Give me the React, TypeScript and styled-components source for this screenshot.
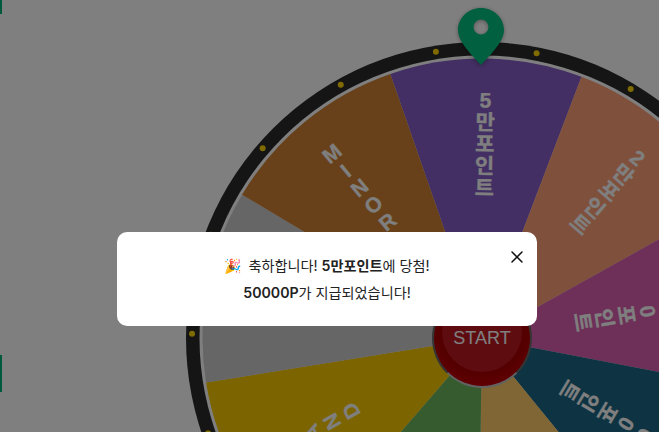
import React from 'react'
import styled, { createGlobalStyle } from 'styled-components'
import { X } from 'lucide-react'

const GlobalStyle = createGlobalStyle`
  html, body {
    margin: 0;
    padding: 0;
    background: #fff;
  }
`

const Stage = styled.div`
  position: relative;
  width: 659px;
  height: 432px;
  overflow: hidden;
  display: flex;
  align-items: flex-start;
`

const SideMark = styled.div<{ $top: number; $height: number }>`
  position: absolute;
  left: 0;
  top: ${(p) => p.$top}px;
  width: 2px;
  height: ${(p) => p.$height}px;
  background: #00b07a;
`

const WheelWrap = styled.div`
  position: relative;
  flex: none;
  width: 592px;
  height: 592px;
  margin: 42px 0 0 186px;
`

const WheelSvg = styled.svg`
  display: block;
`

const WheelChar = styled.text`
  font-family: 'Liberation Sans', 'Noto Sans CJK KR', sans-serif;
  font-size: 21px;
  font-weight: 700;
  fill: #fff;
  stroke: #fff;
  stroke-width: 0.3px;
  text-anchor: middle;
  dominant-baseline: central;
`

const Pin = styled.svg`
  position: absolute;
  left: 272px;
  top: -34px;
  filter: drop-shadow(0 1px 2px rgba(0, 0, 0, 0.35));
`

const StartButton = styled.div`
  position: absolute;
  left: 246px;
  top: 246px;
  width: 100px;
  height: 100px;
  box-sizing: border-box;
  border-radius: 50%;
  border: 2px solid #6a6a6a;
  border-bottom-color: #c4c4c4;
  background: radial-gradient(circle at 50% 40%, #b40000 0%, #aa0000 60%, #e00010 100%);
  display: flex;
  align-items: center;
  justify-content: center;
`

const StartCap = styled.div`
  width: 80px;
  height: 80px;
  margin-top: -12px;
  border-radius: 50%;
  background: #bf1822;
  flex: none;
  display: flex;
  align-items: center;
  justify-content: center;
  padding-top: 12px;
  box-sizing: border-box;
  color: #fff;
  font-family: 'Liberation Sans', sans-serif;
  font-size: 18px;
`

const Overlay = styled.div`
  position: absolute;
  inset: 0;
  background: rgba(0, 0, 0, 0.5);
  display: flex;
  justify-content: center;
  align-items: flex-start;
  padding: 232px 5px 0 0;
  box-sizing: border-box;
`

const Modal = styled.div`
  position: relative;
  width: 420px;
  height: 94px;
  box-sizing: border-box;
  padding-top: 20px;
  background: #fff;
  border-radius: 10px;
  text-align: center;
  font-family: Inter, 'Noto Sans CJK KR', sans-serif;
  font-size: 14.15px;
  line-height: 27px;
  color: #222;
`

const Line = styled.div`
  white-space: nowrap;
`

const Strong = styled.b`
  font-weight: 600;
`

const Emoji = styled.span`
  margin-right: 6px;
`

const CloseButton = styled.div`
  position: absolute;
  top: 15px;
  right: 10px;
  display: flex;
  color: #111;
`

const CX = 296
const CY = 296
const SEG_R = 279.5
const TILT = 0.85

const segments = [
  { color: '#865ec6', label: '5만포인트', start: 238 },
  { color: '#ffa078', label: '2만포인트', start: 238 },
  { color: '#dc60b0', label: '10000포인트', start: 256 },
  { color: '#1c6684', label: '10000포인트', start: 256 },
  { color: '#ffcd68', label: '', start: 0 },
  { color: '#6cb65e', label: '', start: 0 },
  { color: '#f8ca00', label: 'GRAND', start: 238 },
  { color: '#cccccc', label: '', start: 0 },
  { color: '#d08234', label: 'MINOR', start: 238 },
]

const polar = (deg: number, r: number) => {
  const a = ((deg + TILT) * Math.PI) / 180
  return [CX + r * Math.sin(a), CY - r * Math.cos(a)]
}

const wedge = (from: number, to: number) => {
  const [x1, y1] = polar(from, SEG_R)
  const [x2, y2] = polar(to, SEG_R)
  return `M${CX} ${CY}L${x1} ${y1}A${SEG_R} ${SEG_R} 0 0 1 ${x2} ${y2}Z`
}

const dots = Array.from({ length: 18 }, (_, i) => 10 + i * 20)

const App = () => {
  return (
    <Stage>
      <GlobalStyle />
      <SideMark $top={0} $height={14} />
      <SideMark $top={355} $height={37} />
      <WheelWrap>
        <WheelSvg width={592} height={592} viewBox="0 0 592 592">
          <circle cx={CX} cy={CY} r={296} fill="#2a2a2a" />
          <circle cx={CX} cy={CY} r={282.5} fill="#fff" />
          {segments.map((s, i) => (
            <path key={i} d={wedge(i * 40 - 20, i * 40 + 20)} fill={s.color} />
          ))}
          {dots.map((d) => {
            const [x, y] = polar(d, 290)
            return <circle key={d} cx={x} cy={y} r={3} fill="#ffd700" />
          })}
          {segments.map((s, i) => (
            <g key={i} transform={`rotate(${i * 40 + TILT} ${CX} ${CY})`}>
              {Array.from(s.label).map((ch, j) => (
                <WheelChar key={j} x={CX} y={CY - s.start + j * 22}>
                  {ch}
                </WheelChar>
              ))}
            </g>
          ))}
        </WheelSvg>
        <StartButton>
          <StartCap>START</StartCap>
        </StartButton>
        <Pin width={46} height={57} viewBox="0 0 46 57">
          <path
            fillRule="evenodd"
            fill="#00c081"
            d="M23 0C10.3 0 0 9.8 0 22C0 34 13.5 46.5 23 57C32.5 46.5 46 34 46 22C46 9.8 35.7 0 23 0ZM23 11.5A7.5 7.5 0 1 1 23 26.5A7.5 7.5 0 1 1 23 11.5Z"
          />
        </Pin>
      </WheelWrap>
      <Overlay>
        <Modal>
          <Line>
            <Emoji>🎉</Emoji>축하합니다! <Strong>5만포인트</Strong>에 당첨!
          </Line>
          <Line>
            <Strong>50000P</Strong>가 지급되었습니다!
          </Line>
          <CloseButton>
            <X size={20} strokeWidth={1.8} />
          </CloseButton>
        </Modal>
      </Overlay>
    </Stage>
  )
}

export default App
